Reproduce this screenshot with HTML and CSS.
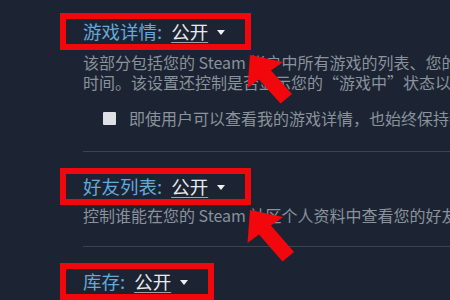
FILE: index.html
```html
<!DOCTYPE html>
<html lang="zh-CN">
<head>
<meta charset="utf-8">
<title>隐私设置</title>
<link rel="stylesheet" href="styles.css">
</head>
<body>
<div class="page">
  <section class="section first">
    <div class="hdr"><span class="label">游戏详情:</span><span class="value">公开</span><span class="caret"></span></div>
    <p class="desc">该部分包括您的 Steam 帐户中所有游戏的列表、您的愿望单、您的成就以及游戏<br>时间。该设置还控制是否显示您的“游戏中”状态以及您正在玩的游戏的名称。</p>
    <div class="check-row"><span class="box"></span><span class="check-text">即使用户可以查看我的游戏详情，也始终保持我的总游戏时间私密</span></div>
  </section>
  <section class="section second">
    <div class="hdr"><span class="label">好友列表:</span><span class="value">公开</span><span class="caret"></span></div>
    <p class="desc">控制谁能在您的 Steam 社区个人资料中查看您的好友列表</p>
  </section>
  <section class="section third">
    <div class="hdr"><span class="label">库存:</span><span class="value">公开</span><span class="caret"></span></div>
  </section>
</div>
<svg class="arrows" width="450" height="300" viewBox="0 0 450 300">
  <polygon class="arrow" points="250,55 283,62 271,70.5 292,94 280.5,103.5 259,79.5 247.5,88"/>
  <polygon class="arrow" points="250,210 283,217 271,225.5 294,252 282.5,261.5 259,234.5 247.5,243"/>
</svg>
</body>
</html>
```
FILE: styles.css
```css
html, body {
  margin: 0;
  padding: 0;
}
body {
  width: 450px;
  height: 300px;
  overflow: hidden;
  position: relative;
  background: #1c2433;
  font-family: "Noto Sans CJK SC", "Liberation Sans", sans-serif;
}
.page {
  width: 900px;
  padding: 13px 0 0 83px;
}
.section {
  border-bottom: 1px solid #394352;
}
.section.first {
  padding-bottom: 23px;
}
.section.second {
  padding-top: 16px;
  padding-bottom: 21px;
}
.section.third {
  padding-top: 16px;
  border-bottom: none;
}
.hdr {
  display: inline-flex;
  align-items: center;
  height: 25px;
  margin-left: -23px;
  padding: 0 20px 0 17px;
  border: 6px solid #f2070d;
  font-size: 18.5px;
  line-height: 25px;
}
.label {
  color: #63a9dc;
  margin-right: 9px;
}
.value {
  color: #e8eaec;
  text-decoration: underline;
  text-decoration-thickness: 1px;
  text-underline-offset: 3px;
  text-decoration-color: #9aa3ad;
}
.caret {
  width: 0;
  height: 0;
  margin-left: 9px;
  margin-top: 2px;
  border-left: 4px solid transparent;
  border-right: 4px solid transparent;
  border-top: 5px solid #f0f0f0;
}
.desc {
  margin: 2px 0 0;
  font-size: 16px;
  line-height: 20px;
  color: #8a929b;
  white-space: nowrap;
}
.second .desc {
  margin-top: 0;
}
.check-row {
  display: flex;
  align-items: center;
  height: 20px;
  margin-top: 16px;
  margin-left: 20px;
}
.box {
  width: 13px;
  height: 13px;
  background: #dde0e4;
  border-radius: 1px;
  flex: none;
}
.check-text {
  margin-left: 13px;
  font-size: 16px;
  line-height: 20px;
  color: #8a929b;
  white-space: nowrap;
}
.arrows {
  position: absolute;
  left: 0;
  top: 0;
  pointer-events: none;
}
.arrow {
  fill: #f2070d;
}
```
